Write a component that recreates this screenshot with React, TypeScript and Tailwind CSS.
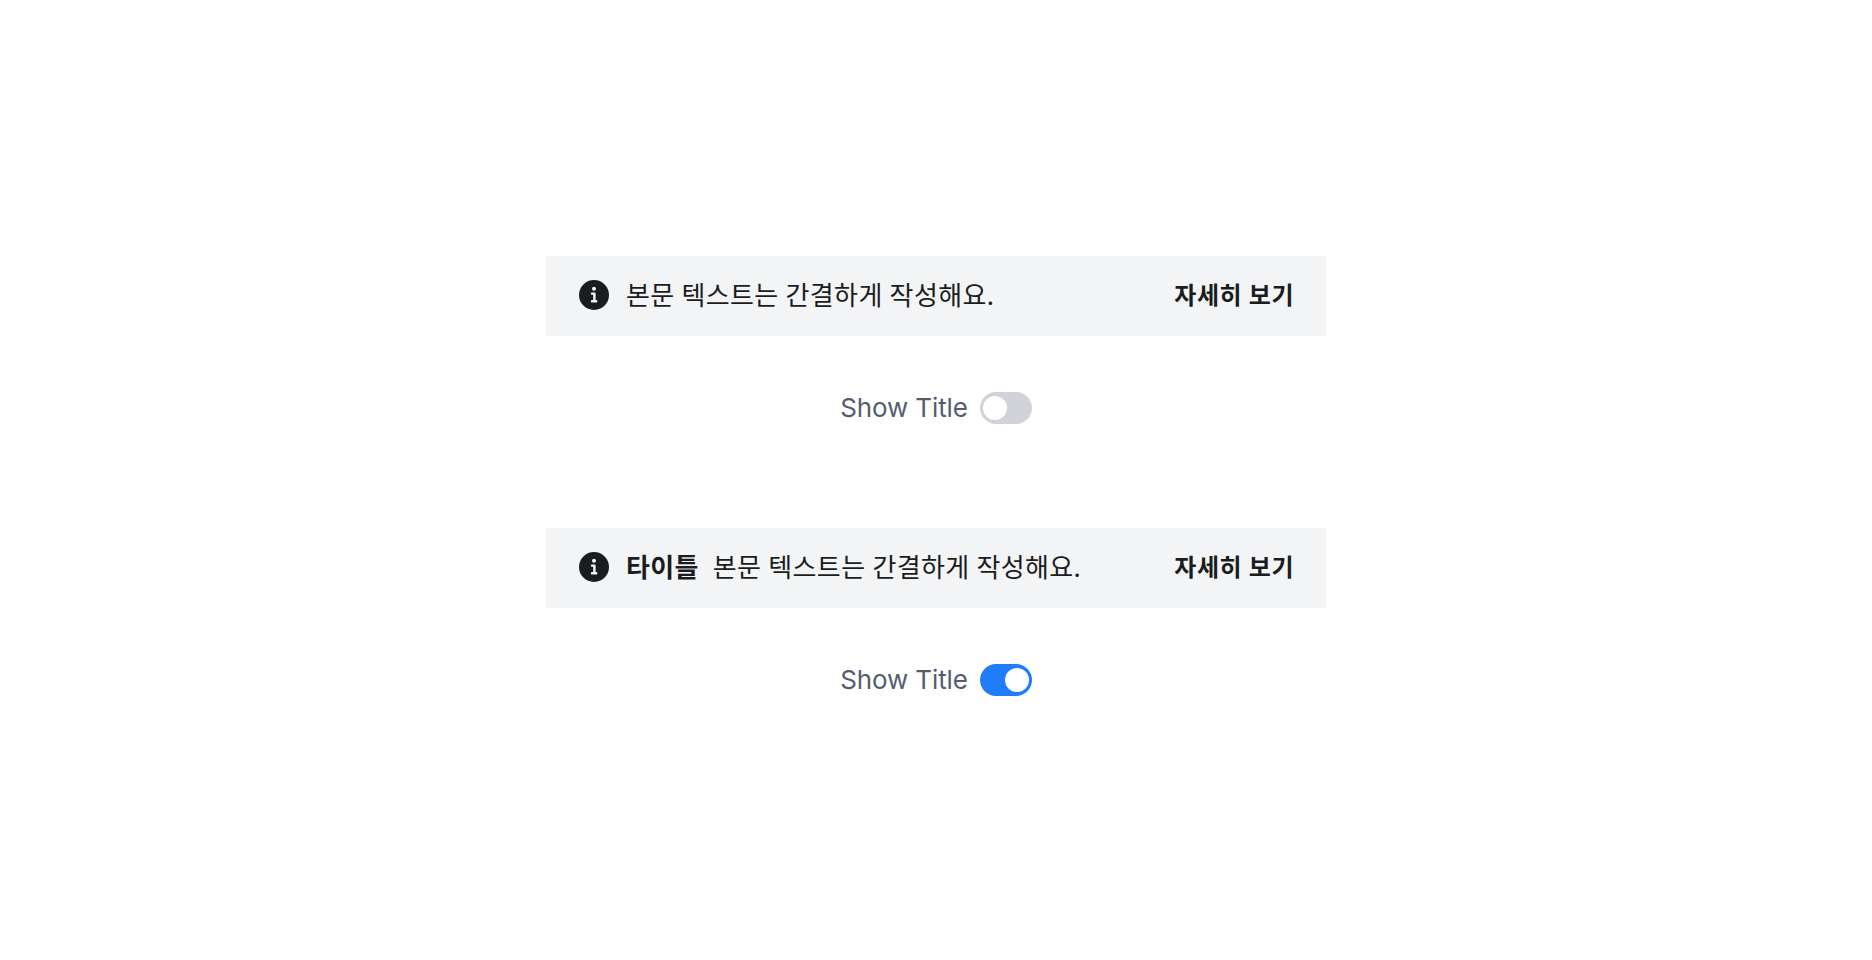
import { useState } from 'react';

function InfoIcon() {
  return (
    <svg className="size-[30px] shrink-0" viewBox="0 0 30 30" fill="none" aria-hidden="true">
      <circle cx="15" cy="15" r="15" fill="#1b1c20" />
      <circle cx="15" cy="8.8" r="2" fill="#f3f4f6" />
      <path
        d="M13 13.6H15.4V21.3M13 21.3H17.2"
        stroke="#f3f4f6"
        strokeWidth="2.4"
        strokeLinecap="round"
        strokeLinejoin="round"
      />
    </svg>
  );
}

function Banner({ showTitle }: { showTitle: boolean }) {
  return (
    <div className="flex h-20 w-[780px] items-center bg-[#f3f4f6] pb-1 pl-[33px] pr-8 text-[#1b1c20]">
      <div className="pt-0.5">
        <InfoIcon />
      </div>
      <p className="ml-[17px] flex items-center whitespace-nowrap text-[26px] leading-9 tracking-[0.35px] [word-spacing:0.8px]">
        {showTitle && <strong className="mr-3.5 font-bold">타이틀</strong>}
        <span>본문 텍스트는 간결하게 작성해요.</span>
      </p>
      <button className="ml-auto whitespace-nowrap text-[24px] font-bold leading-9 tracking-[0.5px] [word-spacing:0.8px]">
        자세히 보기
      </button>
    </div>
  );
}

function Example({ initial }: { initial: boolean }) {
  const [on, setOn] = useState(initial);
  return (
    <section className="flex flex-col items-center gap-14">
      <Banner showTitle={on} />
      <label className="flex h-8 items-center gap-3">
        <span className="w-32 whitespace-nowrap text-center font-['Inter',sans-serif] text-[26px] leading-8 tracking-[-0.12px] text-[#555d6d]">
          Show Title
        </span>
        <button
          role="switch"
          aria-checked={on}
          onClick={() => setOn(!on)}
          className={`flex h-8 w-[52px] items-center rounded-full px-[3px] ${on ? 'justify-end bg-[#217cf9]' : 'justify-start bg-[#d1d3d8]'}`}
        >
          <span className="size-6 rounded-full bg-white" />
        </button>
      </label>
    </section>
  );
}

export default function App() {
  return (
    <main className="flex h-[960px] flex-col items-center gap-[104px] bg-white pt-64 font-['Noto_Sans_CJK_KR',sans-serif]">
      <Example initial={false} />
      <Example initial={true} />
    </main>
  );
}
